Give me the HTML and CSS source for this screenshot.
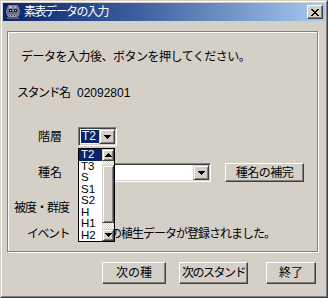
FILE: index.html
```html
<!DOCTYPE html>
<html lang="ja">
<head>
<meta charset="utf-8">
<title>素表データの入力</title>
<link rel="stylesheet" href="styles.css">
</head>
<body>
<div class="window">
  <div class="frame">
    <div class="titlebar">
      <svg class="app-icon" width="16" height="16" viewBox="0 0 16 16" shape-rendering="crispEdges">
        <rect x="3" y="1" width="10" height="13" fill="#7c7f93"/>
        <rect x="2" y="3" width="12" height="9" fill="#7c7f93"/>
        <rect x="1" y="5" width="14" height="5" fill="#6e7184"/>
        <rect x="4" y="2" width="3" height="2" fill="#b8bac6"/>
        <rect x="9" y="2" width="2" height="2" fill="#a8aab8"/>
        <rect x="4" y="5" width="3" height="3" fill="#1a1c30"/>
        <rect x="9" y="5" width="3" height="3" fill="#1a1c30"/>
        <rect x="5" y="6" width="1" height="1" fill="#d0d2dc"/>
        <rect x="10" y="6" width="1" height="1" fill="#d0d2dc"/>
        <rect x="7" y="8" width="2" height="2" fill="#5a5d70"/>
        <rect x="5" y="11" width="6" height="2" fill="#9c9eae"/>
        <rect x="6" y="11" width="1" height="1" fill="#2a2c40"/>
        <rect x="9" y="11" width="1" height="1" fill="#2a2c40"/>
        <rect x="2" y="13" width="12" height="2" fill="#55586c"/>
      </svg>
      <span class="title">素表データの入力</span>
      <span class="close" aria-label="閉じる">
        <svg width="8" height="7" viewBox="0 0 8 7" shape-rendering="crispEdges">
          <path d="M0 0h2v1H0zM6 0h2v1H6zM1 1h2v1H1zM5 1h2v1H5zM2 2h4v1H2zM3 3h2v1H3zM2 4h4v1H2zM1 5h2v1H1zM5 5h2v1H5zM0 6h2v1H0zM6 6h2v1H6z" fill="#000"/>
        </svg>
      </span>
    </div>
    <div class="client">
      <div class="group">
        <p class="msg">データを入力後、ボタンを押してください。</p>
        <div class="row row-stand">
          <span class="label lb-stand">スタンド名</span>
          <span class="value">02092801</span>
        </div>
        <div class="row row-layer">
          <span class="label lb-layer">階層</span>
          <div class="combo-wrap">
            <div class="combo combo-layer">
              <span class="combo-text"><span class="sel">T2</span></span>
              <span class="drop-btn">
                <svg width="7" height="4" viewBox="0 0 7 4" shape-rendering="crispEdges"><path d="M0 0h7v1H0zM1 1h5v1H1zM2 2h3v1H2zM3 3h1v1H3z" fill="#000"/></svg>
              </span>
            </div>
            <div class="droplist">
              <ul class="items">
                <li class="item current">T2</li>
                <li class="item">T3</li>
                <li class="item">S</li>
                <li class="item">S1</li>
                <li class="item">S2</li>
                <li class="item">H</li>
                <li class="item">H1</li>
                <li class="item">H2</li>
              </ul>
              <div class="vscroll">
                <span class="sbtn">
                  <svg width="7" height="4" viewBox="0 0 7 4" shape-rendering="crispEdges"><path d="M3 0h1v1H3zM2 1h3v1H2zM1 2h5v1H1zM0 3h7v1H0z" fill="#000"/></svg>
                </span>
                <span class="track track-top"></span>
                <span class="thumb"></span>
                <span class="track track-bottom"></span>
                <span class="sbtn">
                  <svg width="7" height="4" viewBox="0 0 7 4" shape-rendering="crispEdges"><path d="M0 0h7v1H0zM1 1h5v1H1zM2 2h3v1H2zM3 3h1v1H3z" fill="#000"/></svg>
                </span>
              </div>
            </div>
          </div>
        </div>
        <div class="row row-species">
          <span class="label lb-species">種名</span>
          <div class="combo combo-species">
            <span class="combo-text"></span>
            <span class="drop-btn">
              <svg width="7" height="4" viewBox="0 0 7 4" shape-rendering="crispEdges"><path d="M0 0h7v1H0zM1 1h5v1H1zM2 2h3v1H2zM3 3h1v1H3z" fill="#000"/></svg>
            </span>
          </div>
          <button class="btn btn-complete">種名の補完</button>
        </div>
        <div class="row row-cover">
          <span class="label lb-cover">被度・群度</span>
        </div>
        <div class="row row-event">
          <span class="label lb-event">イベント</span>
          <span class="event-text">の植生データが登録されました。</span>
        </div>
      </div>
      <div class="actions">
        <button class="btn btn-next">次の種</button>
        <button class="btn btn-stand">次のスタンド</button>
        <button class="btn btn-exit">終了</button>
      </div>
    </div>
  </div>
</div>
</body>
</html>
```

FILE: styles.css
```css
* { box-sizing: border-box; }

body {
  margin: 0;
  background: #d4d0c8;
  font-family: "Liberation Sans", "Noto Sans CJK JP", sans-serif;
  font-size: 12px;
  color: #000;
}

.window {
  width: 328px;
  height: 298px;
  border: 1px solid;
  border-color: #d4d0c8 #404040 #404040 #d4d0c8;
  background: #d4d0c8;
}

.frame {
  height: 100%;
  border: 1px solid;
  border-color: #fff #808080 #808080 #fff;
  padding: 1px;
  display: flex;
  flex-direction: column;
}

.titlebar {
  height: 18px;
  flex: none;
  display: flex;
  align-items: center;
  background: linear-gradient(to right, #0a246a 0%, #3a5c9c 40%, #a6caf0 100%);
  color: #fff;
}

.app-icon { margin-left: 2px; flex: none; }

.title {
  margin-left: 3px;
  letter-spacing: -1.5px;
  line-height: 14px;
}

.close {
  margin-left: auto;
  margin-right: 2px;
  width: 16px;
  height: 14px;
  display: flex;
  align-items: center;
  justify-content: center;
  background: #d4d0c8;
  border: 1px solid;
  border-color: #fff #404040 #404040 #fff;
  box-shadow: inset -1px -1px #808080;
}

.client {
  flex: 1;
  display: flex;
  flex-direction: column;
  padding: 10px 7px 0 4px;
}

.group {
  height: 221px;
  border: 1px solid #808080;
  box-shadow: inset 1px 1px #fff, 1px 1px #fff;
  display: flex;
  flex-direction: column;
}

.msg {
  margin: 18px 0 0 13px;
  line-height: 14px;
  letter-spacing: -0.5px;
}

.row {
  display: flex;
  align-items: center;
}

.label {
  width: 70px;
  flex: none;
  line-height: 14px;
  white-space: nowrap;
}

.lb-stand { padding-left: 9px; letter-spacing: -1.5px; }
.lb-layer, .lb-species { padding-left: 30px; }
.lb-cover { padding-left: 6px; letter-spacing: -1px; }
.lb-event { padding-left: 19px; letter-spacing: -1.5px; }

.row-stand { margin-top: 22px; }
.row-layer { margin-top: 27px; }
.row-species { margin-top: 17px; }
.row-cover { margin-top: 19px; }
.row-event { margin-top: 12px; }

.value { margin-left: -1px; line-height: 14px; }

.combo-wrap { position: relative; }

.combo {
  height: 19px;
  display: flex;
  padding: 1px;
  background: #fff;
  border: 1px solid;
  border-color: #808080 #fff #fff #808080;
  box-shadow: inset 1px 1px #404040, inset -1px -1px #d4d0c8;
}

.combo-layer { width: 39px; }
.combo-species { width: 133px; }

.combo-text {
  flex: 1;
  display: flex;
  align-items: center;
  padding-left: 1px;
}

.sel {
  background: #0a246a;
  color: #fff;
  line-height: 13px;
  padding: 0 3px 0 1px;
}

.drop-btn {
  width: 16px;
  flex: none;
  display: flex;
  align-items: center;
  justify-content: center;
  background: #d4d0c8;
  border: 1px solid;
  border-color: #d4d0c8 #404040 #404040 #d4d0c8;
  box-shadow: inset 1px 1px #fff, inset -1px -1px #808080;
}

.droplist {
  position: absolute;
  top: 21px;
  left: 0;
  width: 37px;
  height: 94px;
  border: 1px solid #000;
  background: #fff;
  display: flex;
  z-index: 2;
}

.items {
  flex: 1;
  margin: 0;
  padding: 0;
  list-style: none;
  font-size: 11.5px;
}

.item {
  height: 11.5px;
  line-height: 11.5px;
  padding-left: 2px;
  overflow: hidden;
}

.item.current {
  background: #0a246a;
  color: #fff;
}

.vscroll {
  width: 12px;
  flex: none;
  display: flex;
  flex-direction: column;
}

.sbtn {
  height: 12px;
  flex: none;
  display: flex;
  align-items: center;
  justify-content: center;
  background: #d4d0c8;
  border: 1px solid;
  border-color: #d4d0c8 #404040 #404040 #d4d0c8;
  box-shadow: inset 1px 1px #fff, inset -1px -1px #808080;
}

.track {
  flex: none;
  background-color: #fff;
  background-image: repeating-conic-gradient(#d4d0c8 0 25%, #fff 0 50%);
  background-size: 2px 2px;
}

.track-top { height: 4px; }
.track-bottom { height: 6px; }

.thumb {
  flex: 1;
  background: #d4d0c8;
  border: 1px solid;
  border-color: #d4d0c8 #404040 #404040 #d4d0c8;
  box-shadow: inset 1px 1px #fff, inset -1px -1px #808080;
}

.btn {
  font: inherit;
  color: #000;
  background: #d4d0c8;
  border: 1px solid;
  border-color: #fff #404040 #404040 #fff;
  box-shadow: inset -1px -1px #808080;
  padding: 0;
  line-height: 14px;
  white-space: nowrap;
}

.btn-complete {
  margin-left: 14px;
  width: 79px;
  height: 19px;
  letter-spacing: -0.5px;
}

.event-text {
  margin-left: 32px;
  line-height: 14px;
  letter-spacing: -1px;
  white-space: nowrap;
}

.actions {
  display: flex;
  justify-content: flex-end;
  margin-top: 10px;
  padding-right: 2px;
}

.actions .btn { height: 22px; }
.btn-next { width: 64px; }
.btn-stand { width: 69px; margin-left: 13px; letter-spacing: -1.5px; }
.btn-exit { width: 50px; margin-left: 18px; }
```
